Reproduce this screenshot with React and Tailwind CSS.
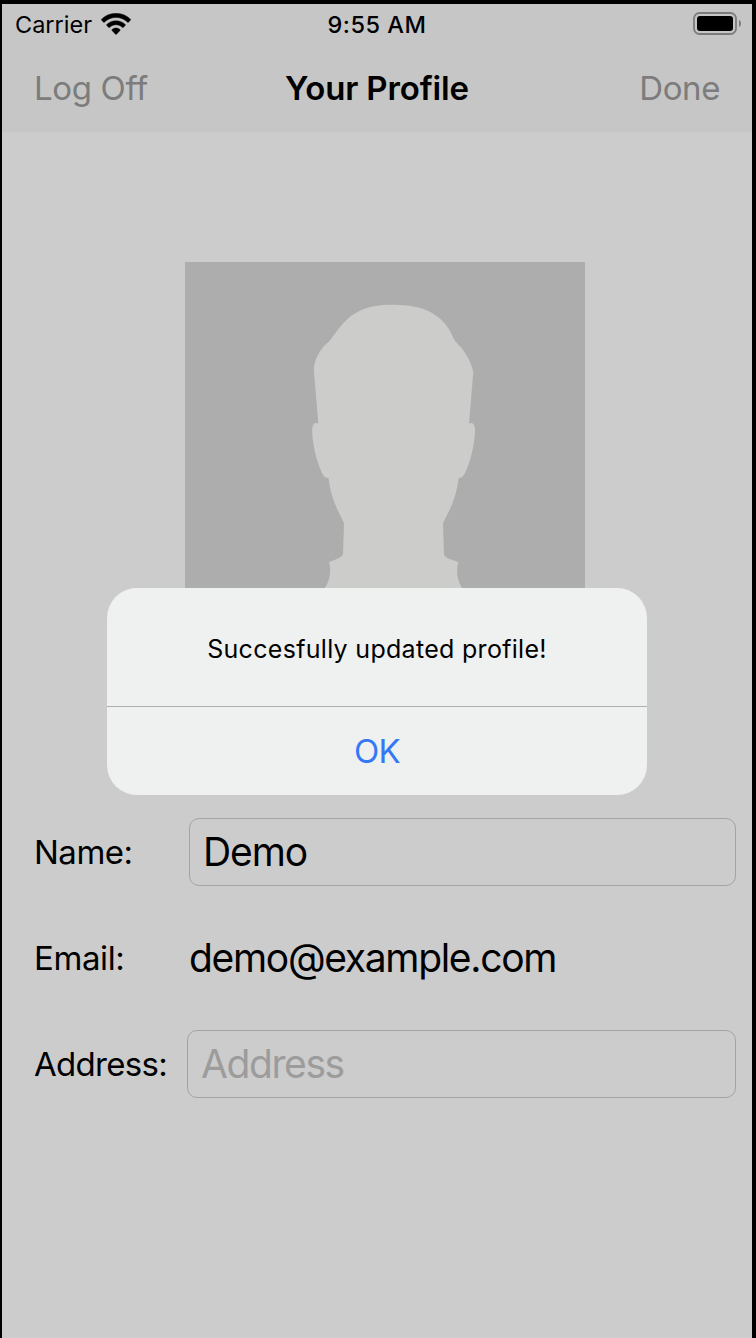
function WifiIcon() {
  return (
    <svg
      className="mb-[2px] ml-[9px] h-[22px] w-[30px]"
      viewBox="0 0 30 22"
      fill="#000"
      stroke="#000"
      strokeWidth="0.4"
    >
      <path d="M15 .3C20.600.3 25.700 2.400 29.500 6.200a.7.7 0 0 1 0 .9L27.500 9.200a.7.7 0 0 1-.9 0C23.500 6.200 19.400 4.500 15 4.500S6.500 6.200 3.400 9.200a.7.7 0 0 1-.9 0L.5 7.100a.7.7 0 0 1 0-.9C4.300 2.400 9.400.3 15 .3Z" />
      <path d="M15 7.700c3.500 0 6.800 1.400 9.300 3.700a.7.7 0 0 1 0 .9l-2 2.100a.7.700 0 0 1-.9 0C19.700 12.800 17.400 11.800 15 11.800s-4.700 1-6.400 2.600a.7.700 0 0 1-.9 0l-2-2.100a.7.700 0 0 1 0-.9C8.200 9.100 11.500 7.700 15 7.700Z" />
      <path d="M15 15c1.500 0 2.900.6 4 1.500a.7.7 0 0 1 0 1l-3.500 3.700a.7.7 0 0 1-1 0L11 17.500a.7.7 0 0 1 0-1C12.100 15.600 13.500 15 15 15Z" />
    </svg>
  );
}

function BatteryIcon() {
  return (
    <svg className="mb-[2px] h-[23px] w-[49px]" viewBox="0 0 49 23">
      <rect x="1" y="1" width="42" height="21" rx="5.500" fill="none" stroke="#7c7c7c" strokeWidth="1.800" />
      <rect x="4" y="4" width="36" height="15" rx="3" fill="#000" />
      <path d="M46 7.800c1.200.8 2 2.100 2 3.700s-.8 2.900-2 3.700Z" fill="#7c7c7c" />
    </svg>
  );
}

function StatusBar() {
  return (
    <div className="grid h-[41px] grid-cols-3 items-center pl-[13px] pr-[10px] text-[23.500px] leading-none">
      <div className="flex items-center">
        <span>Carrier</span>
        <WifiIcon />
      </div>
      <span className="pr-[3px] text-center font-medium tracking-[0.5px]">9:55 AM</span>
      <div className="flex justify-end">
        <BatteryIcon />
      </div>
    </div>
  );
}

function NavBar() {
  return (
    <div className="grid h-[87px] grid-cols-3 items-start px-8 text-[33px] leading-[86px]">
      <span className="tracking-[-0.35px] text-[#7c7c7c]">Log Off</span>
      <h1 className="whitespace-nowrap text-center font-semibold tracking-[-0.15px]">Your Profile</h1>
      <span className="text-right tracking-[-0.4px] text-[#7c7c7c]">Done</span>
    </div>
  );
}

function Avatar() {
  return (
    <svg className="ml-[183px] mt-[130px] block size-[400px] bg-[#adadad]" viewBox="185 262 400 400">
      <path
        fill="#cccccb"
        d="M391 304.700C402 304.700 416 305.800 426 310C432 312.500 437 316 441 319.500C445 323.500 448.500 328 450.500 332C452.500 336 454 340 456.200 342.200C460 346 463.500 350 466.700 355.500C470 361.500 472.500 368 473.300 372L469 423.500C473 421.500 475.300 425 475 431C474.500 446 470 463 465 473C463.500 476.500 461 478.500 458.700 478C456 498 450 510 443 523L444 554C444.300 558 450 559 458.300 562C456 571 457 580 462 588C470 600 500 610 530 622C550 631 560 643 565 662H222C227 643 237 631 257 622C287 610 317 600 325 588C330 580 331.500 571 329 562C337 559 342.700 557 343 554L344 523C337 509 331 498 328.500 478C326 478.500 323.500 476.500 322 473C317 462 312.500 446 312.200 431C312 425 314 421.500 318.300 423.500L314 372C313.500 363 317 355.500 321.700 349C325 344.500 328 343 330.500 339.800C334 335 337 330.500 340 327C345 320.500 351 315.500 356.700 312.500C365 307 378 304.700 391 304.700Z"
      />
    </svg>
  );
}

function Field({ label, labelClass, children }) {
  return (
    <div className="flex h-[68px] items-center pl-8 pr-4 text-[33px] leading-none">
      <label className={labelClass}>{label}</label>
      {children}
    </div>
  );
}

function Alert() {
  return (
    <div
      role="alertdialog"
      className="absolute left-[105px] top-[584px] h-[207px] w-[540px] overflow-hidden rounded-[30px] bg-[#eff0f0] text-center"
    >
      <p className="h-[118px] text-[25px] leading-[122px] tracking-[0.300px]">Succesfully updated profile!</p>
      <button className="block h-[89px] w-full border-t border-[#adaeae] text-[33px] leading-[88px] tracking-[-0.7px] text-[#3478f6]">
        OK
      </button>
    </div>
  );
}

export default function App() {
  return (
    <div className="relative h-[1338px] w-[756px] overflow-hidden border-l-2 border-r-4 border-t-4 border-black bg-[#cccccc] font-['Inter',sans-serif] text-black">
      <header className="h-[128px] bg-[#c6c6c6]">
        <StatusBar />
        <NavBar />
      </header>
      <main>
        <Avatar />
        <div className="mt-[156px] flex flex-col gap-[38px]">
          <Field label="Name:" labelClass="w-[155px] tracking-[-0.5px]">
            <div className="h-full flex-1 rounded-[10px] border border-[#a3a3a3] pl-[13px] text-[39px] leading-[66px] tracking-[-1.1px]">
              Demo
            </div>
          </Field>
          <Field label="Email:" labelClass="w-[155px] tracking-[-0.4px]">
            <div className="pb-[2px] text-[39px] tracking-[-1.32px]">demo@example.com</div>
          </Field>
          <Field label="Address:" labelClass="w-[153px] tracking-[-0.7px]">
            <div className="h-full flex-1 rounded-[10px] border border-[#a3a3a3] pl-[13px] text-[39px] leading-[66px] tracking-[-1.4px] text-[#9c9c9d]">
              Address
            </div>
          </Field>
        </div>
      </main>
      <Alert />
    </div>
  );
}
